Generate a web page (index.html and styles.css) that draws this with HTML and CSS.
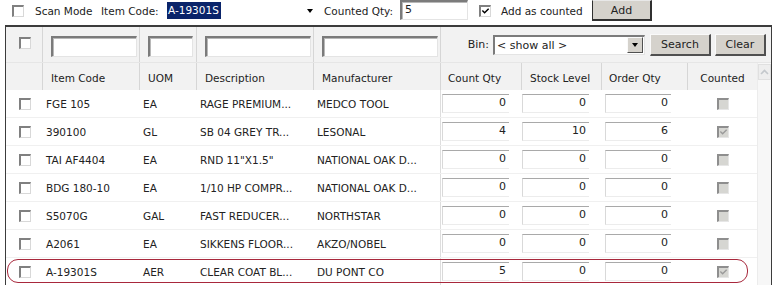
FILE: index.html
```html
<!DOCTYPE html>
<html>
<head>
<meta charset="utf-8">
<link rel="stylesheet" href="styles.css">
</head>
<body>
<div class="toolbar">
  <span class="cb tb-cb1"></span>
  <span class="lbl w-scan">Scan Mode</span>
  <span class="lbl w-item">Item Code:</span>
  <div class="combo"><span class="sel">A-19301S</span><span class="tri"></span></div>
  <span class="lbl w-cqty">Counted Qty:</span>
  <div class="field qtyfield">5</div>
  <span class="cb tb-cb2"><svg width="10" height="10" viewBox="0 0 10 10"><path d="M1.5 4.5 L4 7 L8.5 2.5" fill="none" stroke="#000" stroke-width="1.6"/></svg></span>
  <span class="lbl w-addc">Add as counted</span>
  <button class="btn btn-add">Add</button>
</div>

<div class="grid">
  <div class="filter-row">
    <div class="fcell c1"><span class="cb"></span></div>
    <div class="fcell c2"><div class="field f-item"></div></div>
    <div class="fcell c3"><div class="field f-uom"></div></div>
    <div class="fcell c4"><div class="field f-desc"></div></div>
    <div class="fcell c5"><div class="field f-man"></div></div>
    <div class="fcell c-rest">
      <span class="lbl">Bin:</span>
      <div class="select"><span class="seltext">&lt; show all &gt;</span><span class="selbtn"><span class="tri"></span></span></div>
      <button class="btn btn-search">Search</button>
      <button class="btn btn-clear">Clear</button>
    </div>
  </div>
  <div class="main">
    <div class="rows">
      <div class="hrow">
        <div class="hcell"></div>
        <div class="hcell pl">Item Code</div>
        <div class="hcell pl">UOM</div>
        <div class="hcell pl">Description</div>
        <div class="hcell pl">Manufacturer</div>
        <div class="hcell pl8">Count Qty</div>
        <div class="hcell pl">Stock Level</div>
        <div class="hcell pl8">Order Qty</div>
        <div class="hcell center">Counted</div>
      </div>

      <div class="row">
        <div class="cell center"><span class="cb"></span></div>
        <div class="cell txt">FGE 105</div><div class="cell txt">EA</div><div class="cell txt">RAGE PREMIUM...</div><div class="cell txt">MEDCO TOOL</div>
        <div class="cell qcol"><div class="num n1">0</div></div><div class="cell"><div class="num n2">0</div></div><div class="cell"><div class="num n3">0</div></div>
        <div class="cell center"><span class="cb dis"></span></div>
      </div>
      <div class="row">
        <div class="cell center"><span class="cb"></span></div>
        <div class="cell txt">390100</div><div class="cell txt">GL</div><div class="cell txt">SB 04 GREY TR...</div><div class="cell txt">LESONAL</div>
        <div class="cell qcol"><div class="num n1">4</div></div><div class="cell"><div class="num n2">10</div></div><div class="cell"><div class="num n3">6</div></div>
        <div class="cell center"><span class="cb dis"><svg width="10" height="10" viewBox="0 0 10 10"><path d="M1.5 4.5 L4 7 L8.5 2.5" fill="none" stroke="#9a9a9a" stroke-width="1.5"/></svg></span></div>
      </div>
      <div class="row">
        <div class="cell center"><span class="cb"></span></div>
        <div class="cell txt">TAI AF4404</div><div class="cell txt">EA</div><div class="cell txt">RND 11"X1.5"</div><div class="cell txt">NATIONAL OAK D...</div>
        <div class="cell qcol"><div class="num n1">0</div></div><div class="cell"><div class="num n2">0</div></div><div class="cell"><div class="num n3">0</div></div>
        <div class="cell center"><span class="cb dis"></span></div>
      </div>
      <div class="row">
        <div class="cell center"><span class="cb"></span></div>
        <div class="cell txt">BDG 180-10</div><div class="cell txt">EA</div><div class="cell txt">1/10 HP COMPR...</div><div class="cell txt">NATIONAL OAK D...</div>
        <div class="cell qcol"><div class="num n1">0</div></div><div class="cell"><div class="num n2">0</div></div><div class="cell"><div class="num n3">0</div></div>
        <div class="cell center"><span class="cb dis"></span></div>
      </div>
      <div class="row">
        <div class="cell center"><span class="cb"></span></div>
        <div class="cell txt">S5070G</div><div class="cell txt">GAL</div><div class="cell txt">FAST REDUCER...</div><div class="cell txt">NORTHSTAR</div>
        <div class="cell qcol"><div class="num n1">0</div></div><div class="cell"><div class="num n2">0</div></div><div class="cell"><div class="num n3">0</div></div>
        <div class="cell center"><span class="cb dis"></span></div>
      </div>
      <div class="row">
        <div class="cell center"><span class="cb"></span></div>
        <div class="cell txt">A2061</div><div class="cell txt">EA</div><div class="cell txt">SIKKENS FLOOR...</div><div class="cell txt">AKZO/NOBEL</div>
        <div class="cell qcol"><div class="num n1">0</div></div><div class="cell"><div class="num n2">0</div></div><div class="cell"><div class="num n3">0</div></div>
        <div class="cell center"><span class="cb dis"></span></div>
      </div>
      <div class="row hl">
        <div class="cell center"><span class="cb"></span></div>
        <div class="cell txt">A-19301S</div><div class="cell txt">AER</div><div class="cell txt">CLEAR COAT BL...</div><div class="cell txt">DU PONT CO</div>
        <div class="cell qcol"><div class="num n1">5</div></div><div class="cell"><div class="num n2">0</div></div><div class="cell"><div class="num n3">0</div></div>
        <div class="cell center"><span class="cb dis"><svg width="10" height="10" viewBox="0 0 10 10"><path d="M1.5 4.5 L4 7 L8.5 2.5" fill="none" stroke="#9a9a9a" stroke-width="1.5"/></svg></span></div>
      </div>
    </div>
    <div class="vscroll">
      <div class="sbtn"><svg width="9" height="6" viewBox="0 0 9 6"><path d="M1 5 L4.5 1.5 L8 5" fill="none" stroke="#c4c8cc" stroke-width="1.6"/></svg></div>
    </div>
  </div>
</div>
</body>
</html>
```

FILE: styles.css
```css
html, body {
  margin: 0;
  padding: 0;
  background: #fff;
  overflow: hidden;
}
body {
  font-family: "DejaVu Sans", Tahoma, sans-serif;
  font-size: 10.5px;
  color: #222;
  width: 778px;
  height: 285px;
}
button {
  font-family: inherit;
  font-size: inherit;
  color: #222;
}

/* toolbar */
.toolbar {
  display: flex;
  align-items: center;
  height: 21px;
}
.lbl { white-space: nowrap; }
.tb-cb1 { margin-left: 12px; }
.w-scan { margin-left: 11px; width: 66px; }
.w-item { width: 64px; }
.combo {
  width: 153px;
  height: 19px;
  display: flex;
  align-items: center;
  justify-content: space-between;
  box-sizing: border-box;
  padding-left: 2px;
  padding-right: 5px;
}
.sel {
  background: #0a246a;
  color: #fff;
  height: 17px;
  line-height: 17px;
  padding: 0 2px 0 1px;
}
.tri {
  width: 0;
  height: 0;
  border-left: 3.5px solid transparent;
  border-right: 3.5px solid transparent;
  border-top: 4px solid #000;
}
.w-cqty { margin-left: 6px; width: 76px; }
.field {
  box-sizing: border-box;
  background: #fff;
  border-style: solid;
  border-width: 2px 1px 1px 2px;
  border-color: #7b7b7b #e4e4e4 #e4e4e4 #7b7b7b;
  box-shadow: inset 1px 1px 0 #b8b8b8;
}
.qtyfield {
  width: 68px;
  height: 20px;
  line-height: 16px;
  padding-left: 3px;
  font-size: 11px;
  margin-bottom: 1px;
}
.tb-cb2 { margin-left: 11px; }
.w-addc { margin-left: 10px; width: 91px; }

.cb {
  display: inline-flex;
  align-items: center;
  justify-content: center;
  box-sizing: border-box;
  width: 12px;
  height: 12px;
  background: #fff;
  border-style: solid;
  border-width: 2px 1px 1px 2px;
  border-color: #808080 #d8d8d8 #d8d8d8 #808080;
  flex: none;
}
.cb svg { display: block; }
.cb.dis {
  background: #d6d6d2;
  border-color: #8e8e8e #e6e6e6 #e6e6e6 #8e8e8e;
}

.btn {
  box-sizing: border-box;
  background: #d5d2cc;
  border-style: solid;
  border-width: 1px 2px 2px 1px;
  border-color: #fafafa #505050 #505050 #fafafa;
  padding: 0;
  margin: 0;
  text-align: center;
}
.btn-add {
  width: 60px;
  height: 21px;
  border-color: #e8e8e8 #303030 #303030 #303030;
  font-size: 11px;
}

/* grid */
.grid {
  margin-top: 4px;
  margin-left: 5px;
  width: 765px;
  border-top: 2px solid #3c3c3c;
  border-left: 1px solid #3c3c3c;
  border-right: 1px solid #3c3c3c;
}
.filter-row {
  display: grid;
  grid-template-columns: 36px 97px 57px 117px 127px 331px;
  height: 35px;
  background: #f2f2f2;
  border-bottom: 1px solid #e6e6e6;
  box-sizing: content-box;
}
.fcell {
  box-sizing: border-box;
  display: flex;
  align-items: flex-start;
  padding-top: 9px;
}
.fcell + .fcell { border-left: 1px solid #d6d6d6; }
.fcell.c1 { justify-content: center; padding-top: 10px; padding-left: 1px; }
.fcell.c2, .fcell.c3, .fcell.c4, .fcell.c5 { padding-left: 8px; }
.f-item { width: 86px; height: 21px; }
.f-uom { width: 45px; height: 21px; }
.f-desc { width: 106px; height: 21px; }
.f-man { width: 116px; height: 21px; }
.c-rest {
  justify-content: flex-end;
  align-items: center;
  padding-top: 0;
  padding-right: 5px;
  height: 35px;
}
.c-rest .lbl { margin-right: 4px; font-size: 11px; }
.select {
  box-sizing: border-box;
  width: 152px;
  height: 20px;
  display: flex;
  align-items: center;
  justify-content: space-between;
  background: #fff;
  border-style: solid;
  border-width: 2px 1px 1px 2px;
  border-color: #7b7b7b #e4e4e4 #e4e4e4 #7b7b7b;
  padding-left: 2px;
  padding-right: 1px;
  font-size: 11px;
}
.selbtn {
  box-sizing: border-box;
  width: 16px;
  height: 16px;
  background: #d5d2cc;
  border-style: solid;
  border-width: 1px;
  border-color: #fafafa #505050 #505050 #fafafa;
  display: flex;
  align-items: center;
  justify-content: center;
}
.btn-search { width: 61px; height: 22px; margin-left: 5px; font-size: 11px; }
.btn-clear { width: 51px; height: 22px; margin-left: 4px; font-size: 11px; }

.main {
  display: flex;
}
.rows {
  width: 751px;
}
.hrow, .row {
  display: grid;
  grid-template-columns: 36px 97px 57px 117px 127px 81px 80px 86px 70px;
}
.hrow {
  height: 27px;
  background: #f2f2f2;
}
.hcell {
  box-sizing: border-box;
  display: flex;
  align-items: center;
  padding-top: 3px;
  white-space: nowrap;
}
.hcell + .hcell { border-left: 1px solid #d6d6d6; }
.hcell.pl { padding-left: 8px; }
.hcell.pl8 { padding-left: 7px; }
.center { justify-content: center; }

.row {
  position: relative;
  height: 28px;
  box-sizing: border-box;
  border-bottom: 1px solid #f0f0f0;
}
.cell {
  box-sizing: border-box;
  display: flex;
  align-items: center;
  white-space: nowrap;
  overflow: hidden;
}
.cell.txt { padding-left: 4px; }
.cell.center { padding-left: 1px; }
.qcol { border-left: 1px solid #dedede; }
.num {
  box-sizing: border-box;
  height: 19px;
  line-height: 16px;
  text-align: right;
  padding-right: 3px;
  background: #fff;
  border-top: 1px solid #a9a9a9;
  border-left: 1px solid #d9d9d9;
  border-bottom: 1px solid #ececec;
  font-size: 11px;
}
.n1 { width: 67px; margin-left: 1px; }
.n2 { width: 67px; margin-left: 1px; }
.n3 { width: 66px; margin-left: 4px; }

.row.hl::after {
  content: "";
  position: absolute;
  left: 1px;
  right: 9px;
  top: 1px;
  bottom: 2px;
  border: 1px solid #a8283c;
  border-radius: 11px;
  pointer-events: none;
}

.vscroll {
  width: 14px;
  background: #f7f7f7;
  box-sizing: border-box;
  border-left: 1px solid #ececec;
  padding-top: 1px;
}
.sbtn {
  box-sizing: border-box;
  width: 13px;
  height: 16px;
  background: #eeeeee;
  border: 1px solid #e0e0e0;
  display: flex;
  align-items: center;
  justify-content: center;
}
```
